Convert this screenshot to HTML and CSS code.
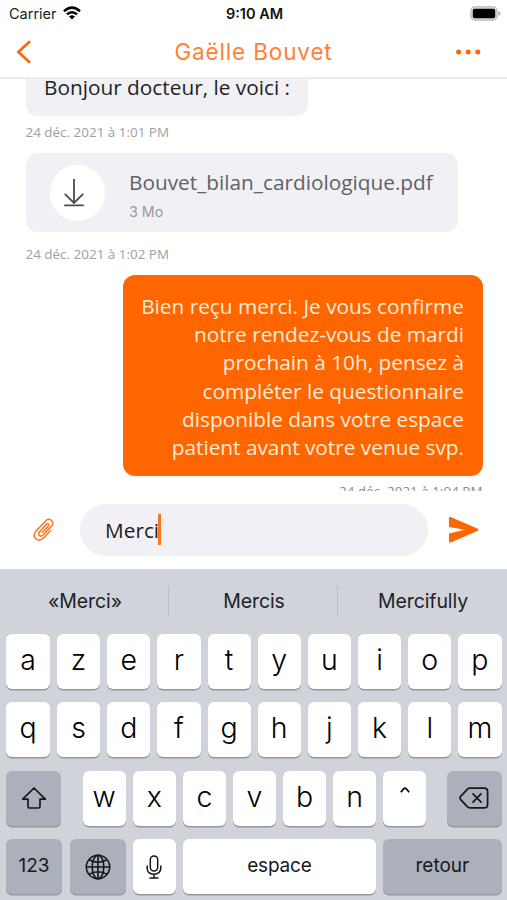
FILE: index.html
```html
<!DOCTYPE html>
<html lang="fr">
<head>
<meta charset="utf-8">
<title>Gaëlle Bouvet</title>
<link rel="stylesheet" href="styles.css">
</head>
<body>
<div class="phone">
  <header class="top">
    <div class="status">
      <div class="carrier"><span>Carrier</span>
        <svg width="18" height="14" viewBox="0 0 18 14" fill="none" stroke="#000" stroke-width="2.5"><path d="M1 5.2Q9-2 17 5.2M3.9 8.4Q9 4 14.1 8.4"/><path d="M6 10.5Q9 8 12 10.5L9 13.6Z" fill="#000" stroke="none"/></svg>
      </div>
      <div class="time">9:10 AM</div>
      <svg class="battery" width="31" height="15" viewBox="0 0 31 15"><rect x=".9" y=".9" width="26.2" height="13.2" rx="4" fill="#ddd" stroke="#bbb" stroke-width="1.2"/><rect x="2.8" y="2.8" width="22.4" height="9.4" rx="1.8"/><path d="M28.5 5v5q2-.8 2-2.5t-2-2.5z" fill="#aaa"/></svg>
    </div>
    <div class="nav">
      <svg class="back" width="16" height="24" viewBox="0 0 16 24" fill="none" stroke="#f86a0c" stroke-width="2.8"><path d="M14 1.3 2.4 12 14 22.7"/></svg>
      <h1>Gaëlle Bouvet</h1>
      <svg class="more" width="25" height="6" viewBox="0 0 25 6" fill="#ff6600"><circle cx="2.6" cy="3" r="2.5"/><circle cx="12.2" cy="3" r="2.5"/><circle cx="21.8" cy="3" r="2.5"/></svg>
    </div>
  </header>

  <main class="chat">
    <div class="bubble first">Bonjour docteur, le voici :</div>
    <time class="stamp">24 déc. 2021 à 1:01 PM</time>
    <div class="file">
      <div class="disc"><svg width="20" height="28" viewBox="0 0 20 28" fill="none" stroke="#4c4c50" stroke-width="1.8"><path d="M10 0v24M.8 14.8 10 24l9.200-9.200M.2 26.300h19.600"/></svg></div>
      <div class="meta"><div class="name">Bouvet_bilan_cardiologique.pdf</div><div class="size">3 Mo</div></div>
    </div>
    <time class="stamp second">24 déc. 2021 à 1:02 PM</time>
    <div class="bubble sent">Bien reçu merci. Je vous confirme<br>notre rendez-vous de mardi<br>prochain à 10h, pensez à<br>compléter le questionnaire<br>disponible dans votre espace<br>patient avant votre venue svp.</div>
    <time class="stamp late">24 déc. 2021 à 1:04 PM</time>
  </main>

  <div class="composer">
    <svg class="clip" width="21" height="24" viewBox="0 0 21 24" fill="none" stroke="#ff741c" stroke-width="1.5" stroke-linecap="round"><path d="M17.600 12.600 10.800 19.800C5.500 25.400-2 19.400 2.600 13.600L12.300 3.200C16.500-1.200 22.200 3.600 18.600 8L10.200 17C7.400 19.600 4 16.800 6.300 14L13.400 6.400C15.200 5 16.500 6.700 15.200 8.200L9.600 14.200"/></svg>
    <div class="field"><span>Merci</span><i class="caret"></i></div>
    <svg class="send" width="32" height="28" viewBox="0 0 32 28" fill="#ff6600"><path d="M1 2.300Q1 .5 2.800 1.100L29.900 12.800Q31.500 13.700 29.900 14.700L2.800 26.500Q1 27 1 25.300V17.400L17 13.700 1 10.900Z"/></svg>
  </div>

  <section class="keyboard">
    <div class="suggest"><span>«Merci»</span><span>Mercis</span><span>Mercifully</span></div>
    <div class="keys">
      <div class="row ten"><b>a</b><b>z</b><b>e</b><b>r</b><b>t</b><b>y</b><b>u</b><b>i</b><b>o</b><b>p</b></div>
      <div class="row ten"><b>q</b><b>s</b><b>d</b><b>f</b><b>g</b><b>h</b><b>j</b><b>k</b><b>l</b><b>m</b></div>
      <div class="row third">
        <b class="dark"><svg width="26" height="24" viewBox="0 0 26 24" fill="none" stroke="#15171b" stroke-width="1.7" stroke-linejoin="round"><path d="M13 2 1.700 13.200H7V20.400Q7 22 8.600 22H17.400Q19 22 19 20.400V13.200H24.300Z"/></svg></b>
        <div class="seven"><b>w</b><b>x</b><b>c</b><b>v</b><b>b</b><b>n</b><b class="caretkey"><svg width="10" height="6" viewBox="0 0 10 6" fill="none" stroke="#000" stroke-width="1.7"><path d="M.8 5.200 3.900 1.700Q5 .7 6.100 1.700L9.200 5.200"/></svg></b></div>
        <b class="dark"><svg width="30" height="22" viewBox="0 0 30 22" fill="none" stroke="#15171b" stroke-width="1.700" stroke-linejoin="round" stroke-linecap="round"><path d="M10.800 1.200H25.200Q28.600 1.200 28.600 4.600V17.400Q28.600 20.800 25.200 20.800H10.800Q9.400 20.800 8.300 19.700L1.700 12.700Q.4 11 1.700 9.300L8.300 2.300Q9.400 1.200 10.800 1.200ZM14 6.800 22 15.200M22 6.800 14 15.200"/></svg></b>
      </div>
      <div class="row fourth">
        <b class="dark word num">123</b>
        <b class="dark globe"><svg width="26" height="26" viewBox="0 0 26 26" fill="none" stroke="#15171b" stroke-width="1.600"><circle cx="13" cy="13" r="11.700"/><ellipse cx="13" cy="13" rx="5.800" ry="11.700"/><path d="M13 1.300v23.400M1.300 13h23.400M4 5.800Q13 10.600 22 5.800M4 20.200Q13 15.400 22 20.200"/></svg></b>
        <b><svg width="16" height="24" viewBox="0 0 16 24" fill="none" stroke="#15171b" stroke-width="1.500" stroke-linecap="round"><rect x="4.300" y="1" width="7.400" height="15" rx="3.700"/><path d="M1.200 11v2.300C1.200 17 4 19.200 8 19.200S14.800 17 14.800 13.300V11M8 19.200V23M4 23H12"/></svg></b>
        <b class="word space">espace</b>
        <b class="dark word ret">retour</b>
      </div>
    </div>
  </section>
</div>
</body>
</html>
```
FILE: styles.css
```css
* { box-sizing: border-box; }
body { margin: 0; background: #fff; font-family: "Open Sans", "Noto Sans", sans-serif; }
svg { display: block; flex: none; }
.phone { width: 507px; height: 900px; display: flex; flex-direction: column; overflow: hidden; }

.top { height: 79px; flex: none; background: #fff; border-bottom: 2px solid #ececee; }
.status { height: 27px; display: grid; grid-template-columns: 1fr auto 1fr; align-items: center; padding: 1px 6px 0 9px; font: 14.5px/20px Inter, sans-serif; color: #222; }
.carrier { display: flex; align-items: center; gap: 6px; }
.carrier svg { margin-top: -2px; }
.time { font-weight: 600; color: #111; margin-left: -1px; }
.battery { justify-self: end; margin-top: -2px; }
.nav { height: 50px; display: grid; grid-template-columns: 60px 1fr 60px; align-items: center; padding: 0 26px 0 16px; }
.nav h1 { margin: 0; font: 400 22.500px/30px Inter, sans-serif; letter-spacing: .85px; color: #ff8136; text-align: center; white-space: nowrap; padding-left: 10px; }
.more { justify-self: end; }

.chat { height: 412px; flex: none; overflow: hidden; padding: 0 24.500px 0 25.500px; display: flex; flex-direction: column; align-items: flex-start; }
.bubble { border-radius: 12px; font-size: 20.800px; line-height: 28.3px; white-space: nowrap; flex: none; }
.first { background: #f0f0f5; color: #1f1f22; width: 282.500px; height: 52px; margin-top: -15px; padding: 9px 18.500px; }
.stamp { font-size: 13.450px; line-height: 18px; color: #a0a0a0; margin-top: 7px; white-space: nowrap; flex: none; }
.file { width: 432.500px; height: 79px; flex: none; margin-top: 12.300px; border-radius: 12px; background: #f0f0f5; display: flex; padding: 12px 24px; gap: 24px; }
.disc { width: 55.500px; height: 55.500px; border-radius: 50%; background: #fff; display: grid; place-items: center; flex: none; padding-right: 7px; }
.name { font-size: 20.800px; line-height: 28px; margin-top: 2.500px; color: #626266; white-space: nowrap; }
.size { font: 14.300px/20px Inter, sans-serif; margin-top: 6px; color: #98989c; }
.second { margin-top: 12.500px; }
.sent { align-self: flex-end; width: 360px; height: 201px; margin-top: 12px; padding: 17px 18.500px; background: #ff6600; color: #ffecd9; text-align: right; }
.late { align-self: flex-end; color: #8c8c8c; margin-top: 6px; }

.composer { height: 78px; flex: none; display: flex; align-items: center; padding: 0 27px 0 33px; }
.field { width: 348px; height: 52px; margin: 0 20px 0 26px; border-radius: 26px; background: #f0f0f5; display: flex; align-items: center; padding-left: 25px; font-size: 20.800px; color: #1c1c1f; }
.caret { width: 3px; height: 31px; background: #ff741c; margin: 0 0 1px -1px; }

.keyboard { flex: 1; background: #d0d3da; font-family: Inter, sans-serif; }
.suggest { height: 65px; display: grid; grid-template-columns: repeat(3, 1fr); align-items: center; text-align: center; font-size: 19.5px; color: #202227; }
.suggest span { line-height: 31px; padding-left: 1px; letter-spacing: -.1px; }
.suggest span + span { border-left: 1px solid #b9bcc4; margin-left: -1px; }
.keys { display: flex; flex-direction: column; gap: 13.5px; padding: 0 5.500px 0 6px; margin-top: -.5px; }
.row { height: 55px; display: grid; gap: 7px; }
.ten { grid-template-columns: 44px repeat(9, 1fr); }
.third { grid-template-columns: 55px 343.500px 55px; justify-content: space-between; gap: 0; }
.seven { display: grid; grid-template-columns: repeat(7, 1fr); gap: 7px; margin-left: .7px; margin-right: -.7px; }
.fourth { grid-template-columns: 56px 56px 43px 193px 1fr; column-gap: 7.300px; }
.fourth .globe { margin-left: .7px; margin-right: -.7px; }
.row b { min-width: 0; display: flex; align-items: center; justify-content: center; background: #fff; border-radius: 6px; box-shadow: 0 1.500px 0 #94979d; font-weight: 300; font-size: 28.500px; line-height: 50px; color: #000; padding-bottom: 3px; }
.row b.dark { background: #abb0ba; }
.row b:has(svg) { padding-bottom: 0; }
.row b.caretkey { padding-bottom: 17px; padding-left: 1px; }
.row b.word { font-size: 19px; font-weight: 400; color: #17191d; padding-bottom: 2px; }
.row b.space { letter-spacing: -.2px; }
```
